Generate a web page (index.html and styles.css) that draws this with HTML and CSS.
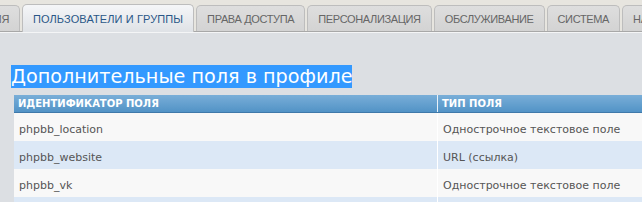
FILE: index.html
```html
<!DOCTYPE html>
<html lang="ru">
<head>
    <meta charset="UTF-8">
    <title>Дополнительные поля в профиле</title>
    <link rel="stylesheet" href="styles.css">
</head>
<body>

    <!-- Вкладки -->
    <div class="tabs">
        <div class="tab tab-cut"><span>Сообщения</span></div>
        <div class="tab active">Пользователи и группы</div>
        <div class="tab">Права доступа</div>
        <div class="tab">Персонализация</div>
        <div class="tab">Обслуживание</div>
        <div class="tab">Система</div>
        <div class="tab">Настройки</div>
    </div>

    <!-- Основная область -->
    <div class="main">
        <h1><span>Дополнительные поля в профиле</span></h1>

        <table class="fields">
            <thead>
                <tr>
                    <th class="col-id">Идентификатор поля</th>
                    <th>Тип поля</th>
                </tr>
            </thead>
            <tbody>
                <tr>
                    <td>phpbb_location</td>
                    <td>Однострочное текстовое поле</td>
                </tr>
                <tr class="row2">
                    <td>phpbb_website</td>
                    <td>URL (ссылка)</td>
                </tr>
                <tr>
                    <td>phpbb_vk</td>
                    <td>Однострочное текстовое поле</td>
                </tr>
                <tr class="row2">
                    <td>phpbb_skype</td>
                    <td>Однострочное текстовое поле</td>
                </tr>
            </tbody>
        </table>
    </div>

</body>
</html>
```

FILE: styles.css
```css
/* Общие стили */
body {
    margin: 0;
    background-color: #e7e5df;
    font-family: "DejaVu Sans", Verdana, sans-serif;
    overflow: hidden;
}

/* Вкладки */
.tabs {
    display: flex;
    gap: 2px;
    padding-top: 5px;
    height: 26px;
    align-items: flex-end;
    border-bottom: 1px solid #a8a8a8;
    white-space: nowrap;
}

.tab {
    flex-shrink: 0;
    height: 25px;
    line-height: 26px;
    padding: 0 10px;
    border: 1px solid #bdbdbd;
    border-bottom: none;
    border-radius: 5px 5px 0 0;
    background: linear-gradient(#dedede, #d3d3d3);
    color: #666;
    font-family: "Liberation Sans", Arial, sans-serif;
    font-size: 11px;
    letter-spacing: -0.35px;
    text-transform: uppercase;
}

.tab-cut {
    width: 9px;
    padding-left: 0;
    overflow: hidden;
    display: flex;
    justify-content: flex-end;
    border-left: none;
    border-radius: 0 5px 0 0;
}

.tab.active {
    height: 27px;
    line-height: 28px;
    margin-bottom: -1px;
    letter-spacing: 0.1px;
    background: linear-gradient(#f5f6f8, #dfe2e6);
    color: #2a5787;
}

/* Основная область */
.main {
    border-top: 1px solid #f4f5f6;
    background-color: #dcdfe3;
    padding: 33px 0 0 11px;
    height: 200px;
}

h1 {
    margin: 0 0 7px;
    font-weight: normal;
    font-size: 19.2px;
    line-height: 22px;
}

h1 span {
    background-color: #3399ff;
    color: #fff;
}

/* Таблица */
.fields {
    margin-left: 3px;
    width: 760px;
    border-collapse: collapse;
    font-size: 11px;
}

.fields th {
    height: 17px;
    padding: 0 4px;
    text-align: left;
    font-size: 10px;
    text-transform: uppercase;
    color: #fff;
    background: linear-gradient(#79aed8, #5293c6);
    border-bottom: 1px solid #3f79aa;
    border-left: 1px solid #e8f1f8;
}

.fields th:first-child {
    border-left: none;
}

.fields .col-id {
    width: 415px;
}

.fields td {
    height: 24px;
    padding: 4px 5px 0;
    color: #555;
    background-color: #f8f8f8;
    border-left: 1px solid #fff;
}

.fields td:first-child {
    border-left: none;
}

.fields .row2 td {
    background-color: #dce8f6;
}
```
